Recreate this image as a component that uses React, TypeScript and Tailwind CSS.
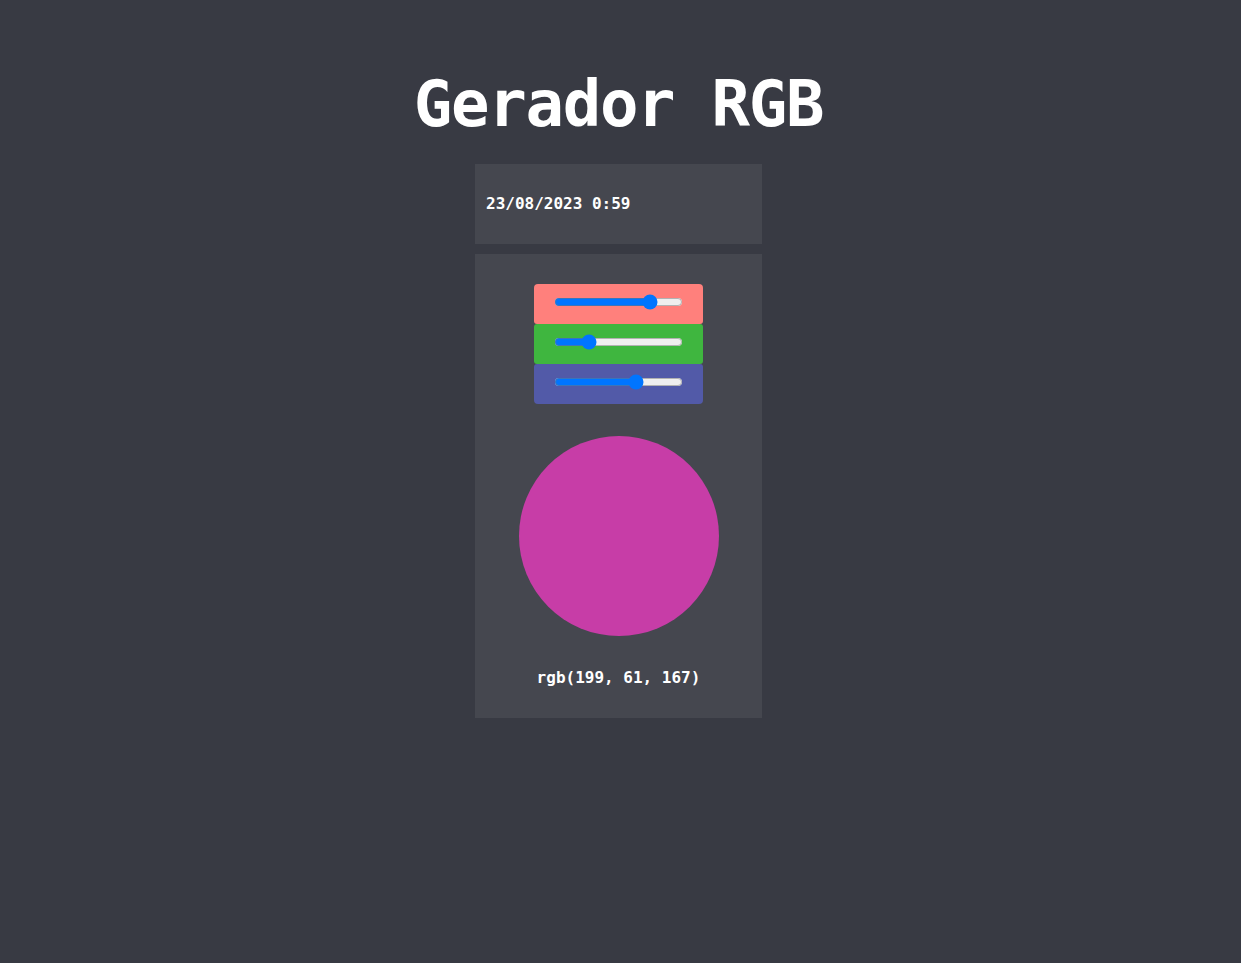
import React, { useState } from "react";

export default function App() {
  const [r, setR] = useState(199);
  const [g, setG] = useState(61);
  const [b, setB] = useState(167);
  const mono = { fontFamily: '"DejaVu Sans Mono", "Liberation Mono", monospace' };
  return (
    <div className="min-h-screen bg-[#383a43] text-white flex flex-col items-center pr-[4px]" style={mono}>
      <h1 className="mt-[66px] h-[98px] text-[64px] leading-[76px] font-bold tracking-[-1.3px]">Gerador RGB</h1>
      <div className="w-[287px] h-[80px] bg-[#45474f] flex items-center px-[11px] text-[16px] font-bold">
        23/08/2023 0:59
      </div>
      <div className="w-[287px] mt-[10px] bg-[#45474f] flex flex-col items-center pt-[30px] pb-[30px]">
        <div className="w-[169px] flex flex-col">
          <div className="h-[40px] bg-[#ff807c] rounded-t-[4px] rounded-b-[3px] flex items-center justify-center">
            <input type="range" min={0} max={255} value={r} onChange={(e) => setR(+e.target.value)} className="w-[129px] mb-[4px] accent-[#0075ff]" />
          </div>
          <div className="h-[40px] bg-[#3fb63f] rounded-[3px] flex items-center justify-center">
            <input type="range" min={0} max={255} value={g} onChange={(e) => setG(+e.target.value)} className="w-[129px] mb-[4px] accent-[#0075ff]" />
          </div>
          <div className="h-[40px] bg-[#525aa8] rounded-b-[4px] rounded-t-[3px] flex items-center justify-center">
            <input type="range" min={0} max={255} value={b} onChange={(e) => setB(+e.target.value)} className="w-[129px] mb-[4px] accent-[#0075ff]" />
          </div>
        </div>
        <div className="mt-[32px] w-[200px] h-[200px] rounded-full" style={{ backgroundColor: `rgb(${r}, ${g}, ${b})` }} />
        <div className="mt-[32px] h-[20px] leading-[20px] text-[16px] font-bold">{`rgb(${r}, ${g}, ${b})`}</div>
      </div>
    </div>
  );
}
